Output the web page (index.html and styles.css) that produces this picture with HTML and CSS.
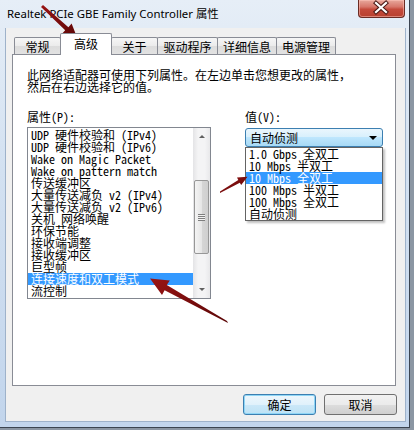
FILE: index.html
```html
<!DOCTYPE html>
<html lang="zh-CN">
<head>
    <meta charset="UTF-8">
    <title>Realtek PCIe GBE Family Controller 属性</title>
    <link rel="stylesheet" href="styles.css">
</head>
<body>
    <div class="window">
        <div class="titlebar">
            <span class="title">Realtek PCIe GBE Family Controller 属性</span>
            <div class="close">
                <svg width="47" height="18" viewBox="0 0 47 18">
                    <path d="M18 4 L28 13 M28 4 L18 13" stroke="#4a1a16" stroke-width="4.2" stroke-linecap="square"/>
                    <path d="M18 4 L28 13 M28 4 L18 13" stroke="#fff" stroke-width="2.2" stroke-linecap="square"/>
                </svg>
            </div>
        </div>
        <div class="client">
            <div class="tabs">
                <div class="tab" style="width:47px">常规</div>
                <div class="tab active" style="width:52px">高级</div>
                <div class="tab" style="width:47px">关于</div>
                <div class="tab" style="width:61px">驱动程序</div>
                <div class="tab" style="width:60px">详细信息</div>
                <div class="tab" style="width:60px">电源管理</div>
            </div>
            <div class="panel">
                <p class="desc">此网络适配器可使用下列属性。在左边单击您想更改的属性，<br>然后在右边选择它的值。</p>
                <div class="props">
                    <div class="prop-col">
                        <div class="label">属性(P):</div>
                        <div class="listbox">
                            <ul class="items">
                                <li>UDP 硬件校验和 (IPv4)</li>
                                <li>UDP 硬件校验和 (IPv6)</li>
                                <li>Wake on Magic Packet</li>
                                <li>Wake on pattern match</li>
                                <li>传送缓冲区</li>
                                <li>大量传送减负 v2 (IPv4)</li>
                                <li>大量传送减负 v2 (IPv6)</li>
                                <li>关机 网络唤醒</li>
                                <li>环保节能</li>
                                <li>接收端调整</li>
                                <li>接收缓冲区</li>
                                <li>巨型帧</li>
                                <li class="sel">连接速度和双工模式</li>
                                <li>流控制</li>
                            </ul>
                            <div class="scrollbar">
                                <div class="sb-btn"><span class="tri up"></span></div>
                                <div class="sb-track">
                                    <div class="thumb"><span class="grip"></span></div>
                                </div>
                                <div class="sb-btn"><span class="tri down"></span></div>
                            </div>
                        </div>
                    </div>
                    <div class="value-col">
                        <div class="label">值(V):</div>
                        <div class="combo-wrap">
                            <div class="combo">自动侦测<span class="combo-arrow"></span></div>
                            <ul class="dropdown">
                                <li>1.0 Gbps 全双工</li>
                                <li>10 Mbps 半双工</li>
                                <li class="sel">10 Mbps 全双工</li>
                                <li>100 Mbps 半双工</li>
                                <li>100 Mbps 全双工</li>
                                <li>自动侦测</li>
                            </ul>
                        </div>
                    </div>
                </div>
            </div>
            <div class="buttons">
                <button class="btn default">确定</button>
                <button class="btn">取消</button>
            </div>
        </div>
    </div>

    <!-- red pointer arrows drawn over the dialog -->
    <svg class="arrows" width="414" height="430" viewBox="0 0 414 430">
        <defs>
            <linearGradient id="ar" x1="0" y1="0" x2="1" y2="1">
                <stop offset="0" stop-color="#9a1414"/>
                <stop offset="1" stop-color="#5a0606"/>
            </linearGradient>
        </defs>
        <polygon fill="url(#ar)" points="41,7 43,5 68.4,27.2 71.6,23.4 77.5,38.5 61.8,34 65.2,30.2"/>
        <polygon fill="url(#ar)" points="228,323 227,321 166.8,285 169.8,280.4 150,278.6 162,295 164.6,290.2"/>
        <polygon fill="url(#ar)" points="220,193 220,191.5 238.3,180 237,177.6 247.5,176.8 241.2,185 239.8,182.8"/>
    </svg>
</body>
</html>
```

FILE: styles.css
```css
body {
    margin: 0;
    width: 414px;
    height: 430px;
    overflow: hidden;
    position: relative;
    background: #8b96a3;
}
.window {
    width: 410px;
    height: 428px;
    box-sizing: border-box;
    border-right: 1px solid #3b4450;
    border-bottom: 1px solid #3b4450;
    background: linear-gradient(#e6eef7, #d3e1f1 40%, #c2d5ec);
    display: flex;
    flex-direction: column;
}
.titlebar {
    height: 28px;
    display: flex;
    justify-content: space-between;
    align-items: flex-start;
}
.title {
    margin: 7px 0 0 7px;
    font-family: "Noto Sans", "Noto Sans CJK SC", sans-serif;
    font-size: 11.4px;
    line-height: 14px;
    color: #000;
}
.close {
    width: 47px;
    height: 18px;
    margin-right: 4px;
    box-sizing: border-box;
    border: 1px solid #6a2b24;
    border-top: none;
    border-radius: 0 0 4px 4px;
    background: linear-gradient(#e8a89c 0%, #d7766a 40%, #c44a3b 55%, #b8402f 100%);
    box-shadow: inset 0 0 0 1px rgba(255, 200, 190, 0.5);
}
.close svg {
    display: block;
    margin: -1px 0 0 -1px;
}
.client {
    height: 394px;
    margin: 0 3px 0 5px;
    box-sizing: border-box;
    border: 1px solid #9eb2ca;
    border-top: none;
    background: #f0f0f0;
    padding-top: 5px;
}
.tabs {
    display: flex;
    align-items: flex-end;
    height: 21px;
    margin-left: 8px;
    position: relative;
    z-index: 1;
}
.tab {
    height: 17px;
    box-sizing: border-box;
    border: 1px solid #898c95;
    border-bottom: none;
    border-radius: 2px 2px 0 0;
    margin-right: -1px;
    background: linear-gradient(#f6f6f6, #ebebeb 50%, #dcdcdc 51%, #e2e2e2);
    font-family: "Noto Sans CJK SC", sans-serif;
    font-size: 12px;
    line-height: 17px;
    text-align: center;
    color: #000;
}
.tab.active {
    height: 22px;
    margin-bottom: -1px;
    background: #fff;
    line-height: 19px;
    position: relative;
    z-index: 2;
}
.panel {
    margin-left: 6px;
    width: 384px;
    height: 332px;
    box-sizing: border-box;
    border: 1px solid #898c95;
    background: #fff;
    padding: 14px 0 0 14px;
    font-family: "Noto Sans Mono CJK SC", "Noto Sans CJK SC", monospace;
    font-size: 12px;
    line-height: 12px;
    color: #000;
}
.desc {
    margin: 0;
}
.props {
    display: flex;
    margin-top: 18px;
    gap: 34px;
}
.label {
    height: 12px;
}
.listbox {
    width: 184px;
    height: 172px;
    margin-top: 4px;
    box-sizing: border-box;
    border: 1px solid #828790;
    display: flex;
}
.items, .dropdown {
    list-style: none;
    margin: 0;
    padding: 0;
}
.items {
    flex: 1;
    padding: 1px 0;
}
.items li, .dropdown li {
    height: 12px;
    padding-left: 3px;
    white-space: nowrap;
}
.items li.sel, .dropdown li.sel {
    background: #3399ff;
    color: #fff;
}
.scrollbar {
    width: 17px;
    display: flex;
    flex-direction: column;
    background: linear-gradient(90deg, #e4e4e6, #f4f4f5 30%, #f4f4f5 70%, #e8e8ea);
}
.sb-btn {
    height: 17px;
    display: flex;
    align-items: center;
    justify-content: center;
}
.tri {
    width: 0;
    height: 0;
    border-left: 3px solid transparent;
    border-right: 3px solid transparent;
}
.tri.up {
    border-bottom: 3px solid #606060;
}
.tri.down {
    border-top: 3px solid #606060;
}
.sb-track {
    flex: 1;
}
.thumb {
    margin: 35px 1px 0 1px;
    height: 74px;
    box-sizing: border-box;
    border: 1px solid #979797;
    border-radius: 2px;
    background: linear-gradient(90deg, #f4f4f4, #e6e6e6 50%, #d6d6d6 51%, #cfcfcf);
    display: flex;
    align-items: center;
    justify-content: center;
}
.grip {
    width: 7px;
    height: 7px;
    background: repeating-linear-gradient(#7e7e7e 0 1px, #f2f2f2 1px 2px);
}
.value-col {
    width: 138px;
}
.combo-wrap {
    position: relative;
    margin-top: 5px;
}
.combo {
    height: 19px;
    box-sizing: border-box;
    border: 1px solid #3c7fb1;
    border-radius: 3px;
    background: linear-gradient(#eaf6fd 0%, #d9f0fc 45%, #bee6fd 50%, #a7d9f5 100%);
    padding-left: 4px;
    font-family: "Noto Sans CJK SC", sans-serif;
    line-height: 17px;
    display: flex;
    justify-content: space-between;
    align-items: center;
}
.combo-arrow {
    margin-right: 5px;
    width: 0;
    height: 0;
    border-left: 4px solid transparent;
    border-right: 4px solid transparent;
    border-top: 4px solid #000;
}
.dropdown {
    position: absolute;
    top: 100%;
    left: 0;
    width: 138px;
    box-sizing: border-box;
    border: 1px solid #646464;
    background: #fff;
    box-shadow: 2px 2px 2px rgba(0, 0, 0, 0.25);
}
.buttons {
    display: flex;
    justify-content: flex-end;
    gap: 8px;
    margin: 8px 8px 0 0;
}
.btn {
    width: 73px;
    height: 21px;
    box-sizing: border-box;
    border: 1px solid #707070;
    border-radius: 3px;
    padding: 0;
    background: linear-gradient(#f2f2f2 0%, #ebebeb 50%, #dddddd 51%, #cfcfcf 100%);
    font-family: "Noto Sans CJK SC", sans-serif;
    font-size: 12px;
    line-height: 19px;
    color: #000;
}
.btn.default {
    border-color: #3c7fb1;
    box-shadow: inset 0 0 0 1px #8fd6f6;
    background: linear-gradient(#eef7fc 0%, #e0f1fb 50%, #cbe8f8 51%, #bde2f5 100%);
}
.arrows {
    position: absolute;
    top: 0;
    left: 0;
    pointer-events: none;
}
```
